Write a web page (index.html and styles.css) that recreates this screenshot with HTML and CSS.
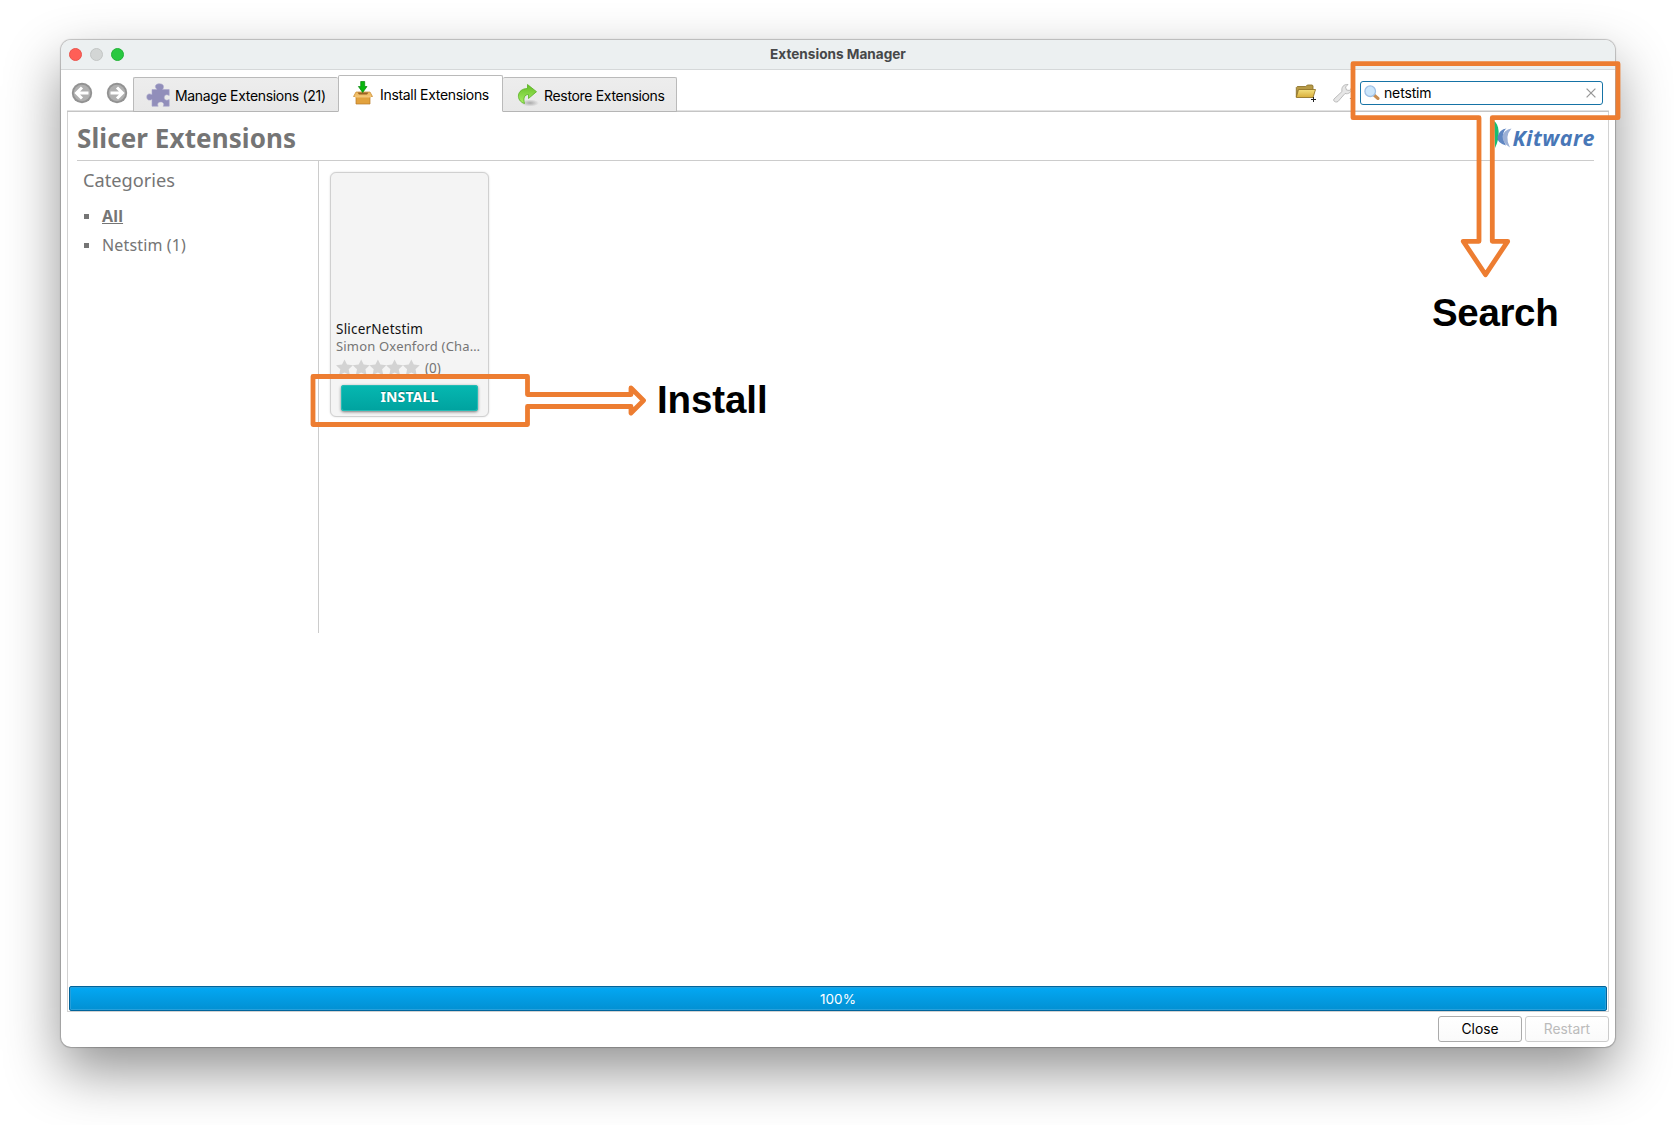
FILE: index.html
```html
<!DOCTYPE html>
<html lang="en">
<head>
<meta charset="utf-8">
<title>Extensions Manager</title>
<link rel="stylesheet" href="styles.css">
</head>
<body>
<main class="window">
  <header class="titlebar">
    <div class="lights"><i class="light red"></i><i class="light idle"></i><i class="light green"></i></div>
    <h1 class="window-title"><span>Extensions Manager</span></h1>
  </header>
  <nav class="toolbar">
    <svg class="nav-btn" viewBox="0 0 22 22"><circle cx="11" cy="11" r="10.2" fill="#929292"/><circle cx="11" cy="11" r="8.3" fill="#b0b0b0"/><path d="M17.5 11H6M11 5.5 5.5 11 11 16.500" fill="none" stroke="#fff" stroke-width="3"/></svg>
    <svg class="nav-btn forward" viewBox="0 0 22 22"><circle cx="11" cy="11" r="10.2" fill="#929292"/><circle cx="11" cy="11" r="8.300" fill="#b0b0b0"/><path d="M4.500 11H16M11 5.500 16.500 11 11 16.500" fill="none" stroke="#fff" stroke-width="3"/></svg>
    <div class="tabs">
      <button class="tab manage">
        <svg class="puzzle" viewBox="0 0 24 24"><path d="M6 6.500h5C8 3.500 9.500.8 13.500.8S18.500 3.800 16.500 6.500h6.700v6c-2.800-1.800-5-.5-5 2s2.200 3.500 5 2v6.700h-6c1.500-2.200 0-4.200-2.500-4.200s-4 2-2.500 4.200H6v-7C3.500 18 .8 17 .8 14s2.500-4 5.200-2.200z" fill="#918eba" stroke="#a9a6cc" stroke-width=".6"/></svg>
        <span>Manage Extensions (21)</span></button>
      <button class="tab install active">
        <svg class="box" viewBox="0 0 20 24"><path d="M3 14h14v9H3z" fill="#e2a23e" stroke="#b87827" stroke-width=".7"/><path d="M3 11h14l2.500 4.500H.5z" fill="#f0bd65" stroke="#c98b32" stroke-width=".7"/><path d="M4.500 11.500h11l-1.500 2H6z" fill="#9a6323"/><path d="M2 14.500h16v2H2z" fill="#f4c676"/><path d="M7.700.5h4v5H14L9.700 11.500 5.400 5.500h2.300z" fill="#07b60c" stroke="#06850a" stroke-width=".7"/></svg>
        <span>Install Extensions</span></button>
      <button class="tab restore">
        <svg class="redo" viewBox="0 0 22 24"><defs><radialGradient id="shade"><stop stop-color="#aaa"/><stop offset="1" stop-color="#aaa" stop-opacity="0"/></radialGradient><linearGradient id="leaf" x2="0" y2="1"><stop stop-color="#64bd24"/><stop offset="1" stop-color="#a8ef68"/></linearGradient></defs><ellipse cx="13" cy="20" rx="9" ry="3.500" fill="url(#shade)"/><path d="M10.500 1.500 19.500 8.700 11.500 15.500v-4c-4 0-5.500 3.500-4 9C-1.500 18-.5 5.500 10.500 5.500z" fill="url(#leaf)" stroke="#58b321" stroke-width=".8"/></svg>
        <span>Restore Extensions</span></button>
    </div>
    <div class="tools">
      <svg class="folder" viewBox="0 0 22 20"><defs><linearGradient id="manila" x2="0" y2="1"><stop stop-color="#f3e07f"/><stop offset="1" stop-color="#d9ae3a"/></linearGradient></defs><path d="M1.300 14V4.500l1-1h8.500l1.500-1.500h5l.7 1V7H3z" fill="#b79a45" stroke="#8f7630" stroke-width=".9"/><path d="M1.300 14.500 3.500 6.500h17l-2.500 8z" fill="url(#manila)" stroke="#94762a" stroke-width=".9"/><path d="M18.500 14v5M16 16.500h5" stroke="#222"/></svg>
      <svg class="wrench" viewBox="0 0 20 20"><path d="M1 16 9 8.500C8 4 11 1 15 1.500L12.500 4l1 3L16.500 7.500 18.500 5c.5 4-3 6.500-6.500 5.500L5 18.500C3 20-.5 18 1 16z" fill="#e6e6e6" stroke="#b5b5b5" stroke-width=".9"/><path d="M16.500 15h3.500v2z" fill="#333"/></svg>
      <label class="search">
        <svg class="lens" viewBox="0 0 16 16"><path d="m10 10 4 3.500" stroke="#c88d51" stroke-width="3" stroke-linecap="round"/><circle cx="6.200" cy="6.200" r="5.300" fill="#cce6fb" stroke="#9fc0e5" stroke-width="1.300"/></svg>
        <span class="query">netstim</span>
        <svg class="clear" viewBox="0 0 10 10"><path d="m.6.6 8.800 8.800M9.400.6.6 9.400" stroke="#999" stroke-width="1.300"/></svg>
      </label>
    </div>
  </nav>
  <section class="panel">
    <header class="page-head">
      <h2 class="heading"><span>Slicer Extensions</span></h2>
      <div class="brand">
        <svg class="brand-mark" viewBox="0 0 18 28"><path d="M0 0C5 3 7 15 1 27z" fill="#18bd72"/><path d="M3.500 16Q5.500 8 12.500 7.500q-6.500 5-.5 17Q3 22 3.500 16z" fill="#5f86c2"/><path d="M8.500 15.500q1-6.500 9-8-7.500 8-1.500 19Q8.500 22 8.500 15.500z" fill="#9bb0d6"/></svg>
        <span class="brand-name">Kitware</span>
      </div>
    </header>
    <div class="content">
      <aside class="sidebar">
        <h3 class="side-title"><span>Categories</span></h3>
        <ul class="cats"><li class="cat all"><span>All</span></li><li class="cat"><span>Netstim (1)</span></li></ul>
      </aside>
      <article class="card">
        <p class="name"><span>SlicerNetstim</span></p>
        <p class="author"><span>Simon Oxenford (Cha…</span></p>
        <div class="rating">
          <svg class="stars" viewBox="0 0 84 17"><defs><path id="star" d="M8.500.5 11 5.500l6 .8-4.300 4 1.200 6-5.400-2.800-5.400 2.800 1.200-6L0 6.300l6-.8z"/></defs><g fill="#d3d3d3"><use href="#star"/><use href="#star" x="16.700"/><use href="#star" x="33.400"/><use href="#star" x="50.100"/><use href="#star" x="66.800"/></g></svg>
          <span>(0)</span>
        </div>
        <button class="install-btn"><span>INSTALL</span></button>
      </article>
    </div>
    <div class="progress"><span>100%</span></div>
  </section>
  <footer class="actions"><button class="btn close"><span>Close</span></button><button class="btn restart"><span>Restart</span></button></footer>
</main>
<svg class="callouts" viewBox="0 0 1674 1125"><g fill="none" stroke="#ed7d31" stroke-width="4.800" stroke-linejoin="round"><path d="M313 376.500H527.500V394.500H631V388L643.500 400.500 631 413V406.500H527.500V424.500H313z"/><path d="M1353 63.700H1618V117.700H1492.300V241.300H1507.700L1485.500 274.700 1463.300 241.300H1479V117.700H1353z"/></g></svg>
<p class="note note-install">Install</p>
<p class="note note-search">Search</p>
</body>
</html>
```
FILE: styles.css
```css
* { box-sizing: border-box; margin: 0; padding: 0; }
body { width: 1674px; height: 1125px; overflow: hidden; background: #fff; padding: 40px 0 0 61px; font: 14px/20px Inter, sans-serif; color: #000; }
svg { display: block; flex: none; }
button { font: inherit; color: inherit; border: 0; }
span { white-space: nowrap; }
.window { width: 1554px; height: 1007px; border-radius: 10px; background: #fff; display: flex; flex-direction: column; box-shadow: 0 0 1px 1px rgba(0,0,0,.22), 0 24px 55px rgba(0,0,0,.43); overflow: hidden; }
.titlebar { height: 30px; flex: none; background: #ecf0f1; border-bottom: 1px solid #d5d8d9; display: grid; grid-template-columns: 1fr auto 1fr; align-items: center; }
.lights { display: flex; gap: 8px; padding-left: 8px; }
.light { width: 13px; height: 13px; border-radius: 50%; }
.red { background: #ff5f57; border: 1px solid #e9544c; }
.idle { background: #d3d6d5; border: 1px solid #c2c5c4; }
.green { background: #28c840; border: 1px solid #22b237; }
.window-title { font-size: 13.600px; line-height: 20px; font-weight: 700; color: #464849; padding-bottom: 1px; }
.toolbar { height: 42px; flex: none; display: flex; align-items: flex-end; margin: 0 6px; box-shadow: inset 0 -1.500px #c5c5c5; }
.nav-btn { width: 22px; height: 22px; margin: 0 0 8px 4px; }
.forward { margin-left: 13px; }
.tabs { display: flex; align-items: flex-end; margin-left: 5px; }
.tab { height: 35px; display: flex; align-items: center; background: linear-gradient(#ededed, #e8e8e8); border: 1px solid #bababa; border-bottom-color: #b5b5b5; border-radius: 2px 2px 0 0; letter-spacing: -.32px; }
.tab span { padding-top: 3px; }
.manage { width: 205px; padding-left: 12px; gap: 5px; border-right: 0; }
.install { width: 165px; height: 37px; padding: 0 0 1px 14px; gap: 7px; background: #fff; border-bottom-color: #fff; }
.install span { padding-top: 3px; }
.restore { width: 174px; padding-left: 14px; gap: 5px; border-left: 0; }
.puzzle { width: 24px; height: 24px; }
.box { width: 20px; height: 24px; }
.redo { width: 22px; height: 24px; }
.tools { height: 42px; flex: 1; display: flex; align-items: center; justify-content: flex-end; padding: 4px 6px 0 0; }
.folder { width: 22px; height: 20px; margin-right: 16px; }
.wrench { width: 20px; height: 20px; margin-right: 7px; }
.search { width: 243px; height: 24px; display: flex; align-items: center; border: 1px solid #1673a6; border-radius: 3px; padding: 0 6px 0 3px; background: #fff; }
.lens { width: 16px; height: 16px; }
.query { margin-left: 4px; flex: 1; letter-spacing: -.15px; }
.clear { width: 10px; height: 10px; }
.panel { width: 1542px; height: 900px; flex: none; margin-left: 6px; border-left: 1px solid #d2d2d2; border-right: 1px solid #d2d2d2; border-bottom: 1px solid #d2d2d2; display: flex; flex-direction: column; font-family: "Noto Sans", sans-serif; color: #757575; }
.page-head { height: 49px; margin: 0 14px 0 9px; border-bottom: 1px solid #ccc; display: flex; justify-content: space-between; }
.heading { font-size: 26px; line-height: 36px; padding-top: 8px; letter-spacing: .1px; }
.brand { display: flex; padding-top: 9px; }
.brand-mark { width: 18px; height: 28px; }
.brand-name { font: italic 700 21.500px/34px "Open Sans", sans-serif; color: #4877b7; letter-spacing: .5px; margin-right: -1px; }
.content { flex: 1; display: flex; }
.sidebar { width: 251px; height: 472px; border-right: 1px solid #ccc; padding-left: 15px; }
.side-title { font-size: 18.200px; line-height: 26px; font-weight: 400; padding-top: 6px; }
.cats { list-style: none; padding-top: 8px; }
.cat { display: flex; align-items: center; height: 29px; font-size: 16px; letter-spacing: .15px; }
.cat::before { content: ""; width: 5px; height: 5px; margin: 2px 13px 0 1px; background: #757575; }
.all { font-weight: 700; text-decoration: underline; }
.card { width: 159px; height: 245px; margin: 11px 0 0 11px; border: 1px solid #d0d0d0; border-radius: 6px; background: #f4f4f4; box-shadow: 0 0 2px rgba(0,0,0,.15); padding: 147px 5px 0; font-size: 13.500px; }
.name { color: #111; line-height: 18px; letter-spacing: .22px; }
.author { line-height: 16px; font-size: 13px; letter-spacing: .18px; padding-bottom: 1px; }
.rating { display: flex; align-items: center; height: 23px; gap: 5px; padding-top: 2px; }
.stars { width: 84px; height: 17px; }
.install-btn { display: flex; align-items: center; justify-content: center; width: 137px; height: 26px; margin: 7px 0 0 5px; border-radius: 3px; background: linear-gradient(#06b8b1, #00a29f); box-shadow: 0 1px 3px rgba(0,0,0,.5), inset 0 0 0 1px #26bcb6; color: #fff; font-weight: 700; font-size: 14px; text-shadow: 0 -1px 1px rgba(0,0,0,.35); padding-bottom: 2px; letter-spacing: .15px; }
.progress { height: 25px; flex: none; margin: 0 1px; border: 1px solid #00649b; border-radius: 2px; box-shadow: inset 0 0 0 1px #279fda; background: linear-gradient(#03a8f4, #0290d2); color: #fff; font: 13.500px/24px Inter, sans-serif; text-align: center; }
.actions { display: flex; justify-content: flex-end; gap: 3px; padding: 4px 6px 0 0; }
.btn { width: 84px; height: 26px; border: 1px solid #ababab; border-radius: 3px; background: linear-gradient(#fff, #fafafa); font-size: 13.800px; }
.restart { border-color: #ccc; color: #bbb; }
.callouts { position: absolute; left: 0; top: 0; width: 1674px; height: 1125px; }
.note { position: absolute; font: 700 38.500px/44px "Liberation Sans", Arial, sans-serif; letter-spacing: -.35px; }
.note-install { left: 657px; top: 378px; letter-spacing: -.1px; }
.note-search { left: 1432px; top: 291px; }
```
